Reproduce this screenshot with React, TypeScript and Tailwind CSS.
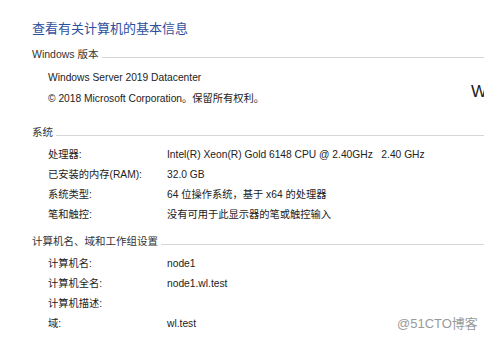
import React from "react";

const font = { fontFamily: '"Liberation Sans", "Noto Sans CJK SC", sans-serif' };

function Header({ text, className = "" }: { text: string; className?: string }) {
  return (
    <div className={`flex items-center h-[20px] ${className}`}>
      <span className="text-[10.5px] text-[#333] whitespace-nowrap">{text}</span>
      <div className="flex-1 h-px bg-[#d6d6d6] ml-[3px] mt-[4px]" />
    </div>
  );
}

function Row({ label, value }: { label: string; value?: string }) {
  return (
    <div className="flex h-[20px] items-center text-[10.25px] text-[#222] pl-[16px] whitespace-pre">
      <span className="w-[119px]">{label}</span>
      <span>{value}</span>
    </div>
  );
}

export default function App() {
  return (
    <div className="relative w-[484px] h-[338px] bg-white overflow-hidden" style={font}>
      <div className="pl-[32px] pt-[19px]">
        <div className="h-[20px] flex items-center text-[13px] text-[#2e4f9e]">查看有关计算机的基本信息</div>
        <Header text="Windows 版本" className="mt-[6px]" />
        <div className="pl-[16px] text-[10.25px] text-[#222] mt-[2px]">
          <div className="h-[21px] flex items-center">Windows Server 2019 Datacenter</div>
          <div className="h-[21px] flex items-center">© 2018 Microsoft Corporation。保留所有权利。</div>
        </div>
        <Header text="系统" className="mt-[14px]" />
        <div className="mt-[2px]">
          <Row label="处理器:" value="Intel(R) Xeon(R) Gold 6148 CPU @ 2.40GHz   2.40 GHz" />
          <Row label="已安装的内存(RAM):" value="32.0 GB" />
          <Row label="系统类型:" value="64 位操作系统，基于 x64 的处理器" />
          <Row label="笔和触控:" value="没有可用于此显示器的笔或触控输入" />
        </div>
        <Header text="计算机名、域和工作组设置" className="mt-[7px]" />
        <div className="mt-[2px]">
          <Row label="计算机名:" value="node1" />
          <Row label="计算机全名:" value="node1.wl.test" />
          <Row label="计算机描述:" value="" />
          <Row label="域:" value="wl.test" />
        </div>
      </div>
      <div className="absolute left-[471px] top-[82px] text-[17px] text-[#222] leading-[20px]">W</div>
      <div className="absolute left-[397px] top-[315px] text-[13px] text-[#9a9a9a] leading-[18px] whitespace-nowrap">@51CTO博客</div>
    </div>
  );
}
